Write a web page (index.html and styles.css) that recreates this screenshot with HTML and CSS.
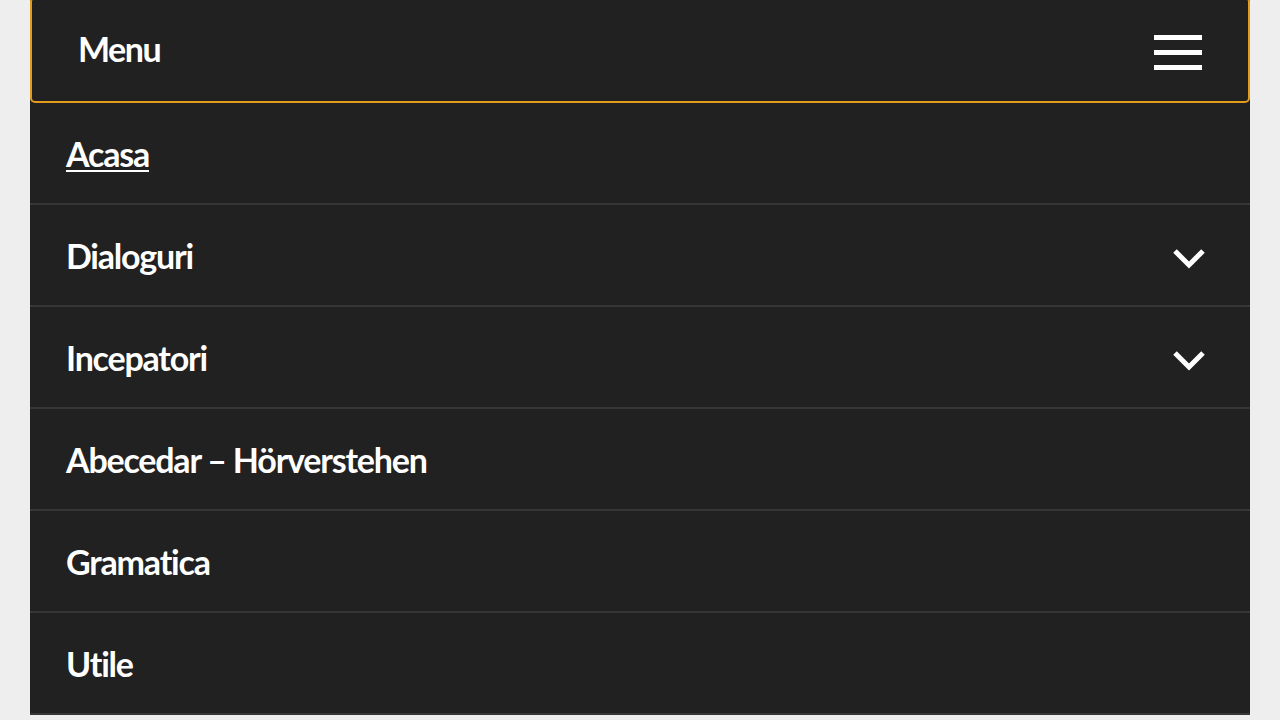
FILE: index.html
```html
<!DOCTYPE html>
<html lang="en">
<head>
    <meta charset="UTF-8">
    <meta name="viewport" content="width=device-width, initial-scale=1.0">
    <title>Menu</title>
    <link rel="stylesheet" href="styles.css">
</head>
<body>
    <nav class="mobile-nav">
        <button class="menu-toggle">
            <span class="menu-label">Menu</span>
            <span class="burger">
                <span></span>
                <span></span>
                <span></span>
            </span>
        </button>
        <ul class="menu-list">
            <li class="menu-item"><a href="#" class="current">Acasa</a></li>
            <li class="menu-item">
                <a href="#">Dialoguri</a>
                <svg class="chevron" width="34" height="24" viewBox="0 0 34 24"><path d="M3 5 L17 19 L31 5" fill="none" stroke="#fff" stroke-width="5"/></svg>
            </li>
            <li class="menu-item">
                <a href="#">Incepatori</a>
                <svg class="chevron" width="34" height="24" viewBox="0 0 34 24"><path d="M3 5 L17 19 L31 5" fill="none" stroke="#fff" stroke-width="5"/></svg>
            </li>
            <li class="menu-item"><a href="#">Abecedar – Hörverstehen</a></li>
            <li class="menu-item"><a href="#">Gramatica</a></li>
            <li class="menu-item"><a href="#">Utile</a></li>
        </ul>
    </nav>
</body>
</html>
```

FILE: styles.css
```css
body {
    margin: 0;
    background-color: #eeeeee;
    font-family: 'Lato', 'Liberation Sans', sans-serif;
    overflow: hidden;
}

.mobile-nav {
    margin: 0 30px;
    background: #212121;
}

.menu-toggle {
    display: flex;
    align-items: center;
    justify-content: space-between;
    width: 100%;
    height: 106px;
    margin-top: -3px;
    padding: 0 46px 0 46px;
    box-sizing: border-box;
    background: #212121;
    border: 2px solid #e39b1c;
    border-radius: 5px;
    color: #ffffff;
    font-family: inherit;
    cursor: pointer;
}

.menu-label {
    font-size: 34px;
    font-weight: 700;
    letter-spacing: -1.5px;
    padding-bottom: 4px;
}

.burger {
    display: flex;
    flex-direction: column;
    gap: 10px;
    width: 48px;
    padding-top: 5px;
}

.burger span {
    display: block;
    height: 5px;
    background: #ffffff;
}

.menu-list {
    list-style: none;
    margin: 0;
    padding: 0;
}

.menu-item {
    display: flex;
    align-items: center;
    justify-content: space-between;
    height: 100px;
    padding: 0 44px 0 36px;
    border-bottom: 2px solid #363636;
}

.menu-item a {
    color: #ffffff;
    text-decoration: none;
    font-size: 34px;
    font-weight: 700;
    letter-spacing: -1.2px;
}

.menu-item a.current {
    text-decoration: underline;
    text-decoration-thickness: 2px;
    text-underline-offset: 3px;
}

.chevron {
    display: block;
    margin-top: 6px;
}
```
